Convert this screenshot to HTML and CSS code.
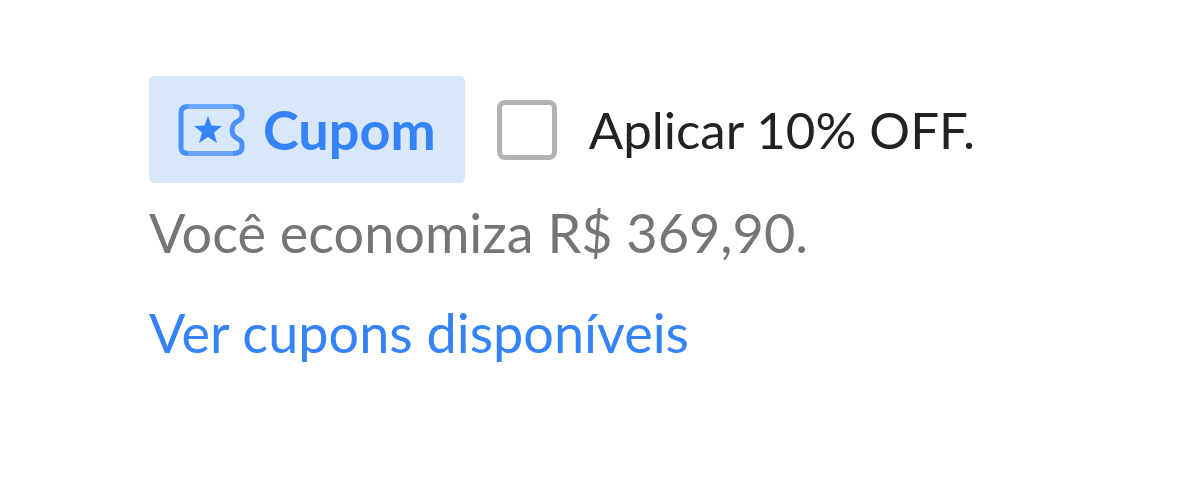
FILE: index.html
```html
<!DOCTYPE html>
<html lang="pt-BR">
<head>
<meta charset="utf-8">
<title>Cupom</title>
<link rel="stylesheet" href="styles.css">
</head>
<body>
<main class="coupon">
  <div class="coupon-row">
    <span class="badge">
      <svg class="badge-icon" viewBox="0 0 68 56" aria-hidden="true">
        <path d="M10 4.500H57M10 51.500H57" fill="none" stroke="#6ca7fd" stroke-width="5"/>
        <path d="M11 4.500Q4 4.500 4 11V45Q4 51.500 11 51.500M56 4.500Q65 4.500 65 11V14Q65 17 61 19Q55 22 55 28Q55 34 61 37Q65 39 65 42V45Q65 51.500 56 51.500" fill="none" stroke="#4a91fb" stroke-width="5" stroke-linejoin="round"/>
        <path d="M31 14L34.500 23.500L45 24L37 30.500L40 41L31 35L22 41L25 30.500L17 24L27.500 23.500Z" fill="#3483fa"/>
      </svg>
      <span>Cupom</span>
    </span>
    <label class="apply"><input class="apply-box" type="checkbox"><span>Aplicar 10% OFF.</span></label>
  </div>
  <p class="saving">Você economiza R$ 369,90.</p>
  <a class="more" href="#">Ver cupons disponíveis</a>
</main>
</body>
</html>
```
FILE: styles.css
```css
body {
  margin: 0;
  background: #fff;
  color: #222;
  font-family: "Lato", sans-serif;
  font-size: 54px;
  line-height: 60px;
}
.coupon {
  padding: 76px 32px 32px 149px;
}
.coupon-row {
  display: flex;
  align-items: center;
  gap: 32px;
}
.badge {
  display: flex;
  align-items: center;
  gap: 18px;
  padding: 24px 29px 23px 28px;
  border-radius: 5px;
  background: #d9e7fa;
  color: #3483fa;
  font-weight: 700;
}
.badge-icon {
  width: 68px;
  height: 56px;
}
.apply {
  display: flex;
  align-items: center;
  gap: 32px;
  font-size: 51px;
}
.apply-box {
  appearance: none;
  box-sizing: border-box;
  width: 60px;
  height: 60px;
  margin: 0;
  border: 5px solid #b3b3b3;
  border-radius: 8px;
  background: #fff;
}
.apply-box:checked {
  background: #3483fa;
}
.saving {
  margin: 20px 0 40px;
  color: #757575;
}
.more {
  color: #3483fa;
  text-decoration: none;
}
```
